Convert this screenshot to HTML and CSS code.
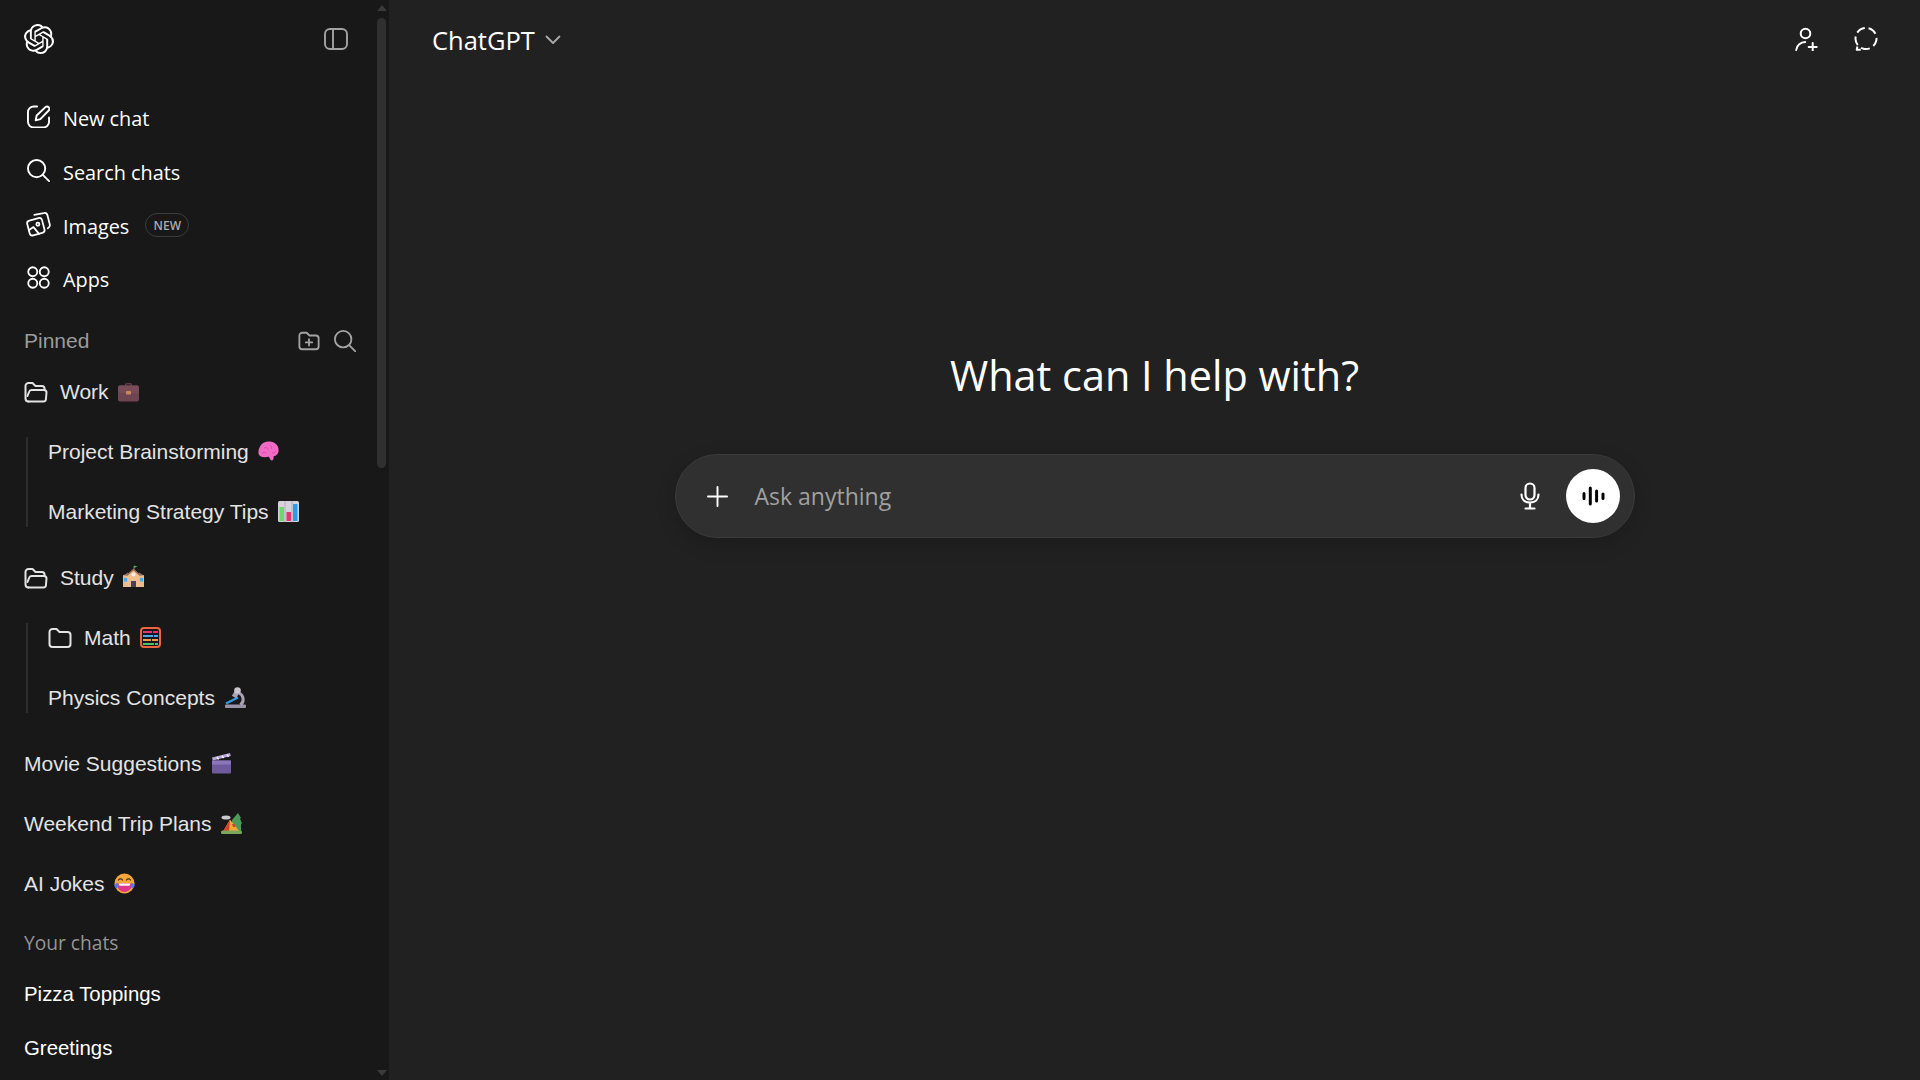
FILE: index.html
```html
<!DOCTYPE html>
<html lang="en">
<head>
<meta charset="utf-8">
<title>ChatGPT</title>
<link rel="stylesheet" href="styles.css">
</head>
<body>
<div class="app">
  <aside class="sidebar">
    <div class="side-content">
      <div class="side-top">
        <svg class="logo" viewBox="0 0 24 24"><path fill="#fff" d="M22.282 9.821a5.985 5.985 0 0 0-.516-4.91 6.046 6.046 0 0 0-6.51-2.9A6.065 6.065 0 0 0 4.981 4.18a5.985 5.985 0 0 0-3.998 2.9 6.046 6.046 0 0 0 .743 7.097 5.98 5.98 0 0 0 .51 4.911 6.051 6.051 0 0 0 6.515 2.9A5.985 5.985 0 0 0 13.26 24a6.056 6.056 0 0 0 5.772-4.206 5.99 5.99 0 0 0 3.997-2.9 6.056 6.056 0 0 0-.747-7.073zM13.26 22.43a4.476 4.476 0 0 1-2.876-1.04l.141-.081 4.779-2.758a.795.795 0 0 0 .392-.681v-6.737l2.02 1.168a.071.071 0 0 1 .038.052v5.583a4.504 4.504 0 0 1-4.494 4.494zM3.6 18.304a4.47 4.47 0 0 1-.535-3.014l.142.085 4.783 2.759a.771.771 0 0 0 .78 0l5.843-3.369v2.332a.08.08 0 0 1-.033.062L9.74 19.95a4.5 4.5 0 0 1-6.14-1.646zM2.34 7.896a4.485 4.485 0 0 1 2.366-1.973V11.6a.766.766 0 0 0 .388.676l5.815 3.355-2.02 1.168a.076.076 0 0 1-.071 0l-4.83-2.786A4.504 4.504 0 0 1 2.34 7.872zm16.597 3.855l-5.833-3.387L15.119 7.2a.076.076 0 0 1 .071 0l4.83 2.791a4.494 4.494 0 0 1-.676 8.105v-5.678a.79.79 0 0 0-.407-.667zm2.01-3.023l-.141-.085-4.774-2.782a.776.776 0 0 0-.785 0L9.409 9.23V6.897a.066.066 0 0 1 .028-.061l4.83-2.787a4.5 4.5 0 0 1 6.68 4.66zm-12.64 4.135l-2.02-1.164a.08.08 0 0 1-.038-.057V6.075a4.5 4.5 0 0 1 7.375-3.453l-.142.08L8.704 5.46a.795.795 0 0 0-.393.681zm1.097-2.365l2.602-1.5 2.607 1.5v2.999l-2.597 1.5-2.607-1.5z"/></svg>
        <svg class="ico-toggle" viewBox="0 0 24 22" fill="none" stroke="#a3a3a3" stroke-width="1.9"><rect x="1" y="1" width="22" height="20" rx="5"/><path d="M9 1.5v19"/></svg>
      </div>

      <nav class="nav">
        <div class="nav-row">
          <svg class="ico" viewBox="0 0 24 24" fill="none" stroke="#fff" stroke-width="2" stroke-linecap="round" stroke-linejoin="round"><path d="M10.5 1.500H7a6 6 0 0 0-6 6v10a6 6 0 0 0 6 6h10a6 6 0 0 0 6-6v-4.500"/><path d="M19.500 2a2.500 2.500 0 0 1 3.400 3.500l-9 9.300-4.900 1.200 1.100-5z"/></svg>
          <span>New chat</span>
        </div>
        <div class="nav-row">
          <svg class="ico" viewBox="0 0 24 24" fill="none" stroke="#fff" stroke-width="2" stroke-linecap="round"><circle cx="10" cy="10" r="9"/><path d="M16.500 16.500l7 7"/></svg>
          <span>Search chats</span>
        </div>
        <div class="nav-row">
          <svg class="ico ico-wide" viewBox="0 0 24 24" fill="none" stroke="#fff" stroke-width="1.700" stroke-linecap="round" stroke-linejoin="round"><path d="M3.200 8.200l8.800-2.400a2.800 2.800 0 0 1 3.400 2l2.300 8.800a2.800 2.800 0 0 1-2 3.400l-8.800 2.400a2.800 2.800 0 0 1-3.400-2L1.200 11.600a2.800 2.800 0 0 1 2-3.400z"/><path d="M8 2.800l9-1.800a3 3 0 0 1 3.600 2.200l2.200 8.600c.4 1.600-.3 3-1.800 3.800"/><path d="M2.600 17.500l4.600-3 5.300 6.500"/><circle cx="11.400" cy="11.800" r="1.500"/></svg>
          <span>Images</span>
          <span class="badge">NEW</span>
        </div>
        <div class="nav-row">
          <svg class="ico" viewBox="0 0 24 24" fill="none" stroke="#fff" stroke-width="1.900"><circle cx="6" cy="6" r="4.700"/><circle cx="18" cy="6" r="4.700"/><circle cx="6" cy="18" r="4.700"/><circle cx="18" cy="18" r="4.700"/></svg>
          <span>Apps</span>
        </div>
      </nav>

      <div class="section-head">
        <span>Pinned</span>
        <div class="section-tools">
          <svg class="ico-sm" viewBox="0 0 24 24" fill="none" stroke="#a3a3a3" stroke-width="2" stroke-linecap="round" stroke-linejoin="round"><path d="M1.500 6a3 3 0 0 1 3-3h5l3 3h7a3 3 0 0 1 3 3v9a3 3 0 0 1-3 3h-15a3 3 0 0 1-3-3z"/><path d="M12 10v7M8.500 13.500h7"/></svg>
          <svg class="ico-sm" viewBox="0 0 24 24" fill="none" stroke="#a3a3a3" stroke-width="2" stroke-linecap="round"><circle cx="10" cy="10" r="9"/><path d="M16.500 16.500l7 7"/></svg>
        </div>
      </div>

      <div class="pinned">
        <div class="p-row">
          <svg class="ico-folder" viewBox="0 0 24 22" fill="none" stroke="#e3e3e3" stroke-width="2" stroke-linecap="round" stroke-linejoin="round"><path d="M4.500 20.500h15a2.500 2.500 0 0 0 2.400-2l.6-7a2.500 2.500 0 0 0-2.500-2.500H7.500a2.500 2.500 0 0 0-2.400 1.800L3.500 15"/><path d="M4.500 20.500A3 3 0 0 1 1.500 17.500V5a3 3 0 0 1 3-3h4l3 3h6.500a2.500 2.500 0 0 1 2.500 2.500V9"/></svg>
          <span>Work</span>
          <svg class="emoji" viewBox="0 0 21 21"><path fill="#5f3a45" d="M7 5V3.500A1.500 1.500 0 0 1 8.500 2h4A1.500 1.500 0 0 1 14 3.500V5h-1.600V3.600H8.600V5z"/><rect y="4.500" width="21" height="16" rx="2" fill="#6f4552"/><rect y="4.500" width="21" height="7.500" rx="2" fill="#7a4c5a"/><rect x="8" y="10" width="5" height="3.500" rx=".8" fill="#c98a5a"/></svg>
        </div>
        <div class="tree">
          <div class="t-row"><span>Project Brainstorming</span>
            <svg class="emoji" viewBox="0 0 21 21"><path fill="#f26ac4" d="M6 1.500c3-1.500 8-1.500 10.500.5 3 1.500 4.500 5 4 8.500-.3 2.500-2.500 4.500-5 5 .5 2.300-.3 4-1.800 4-1.500-.5-2-2-2.700-3.700C6 16.500 2 16.500.600 13 0 9.500 1.500 4 6 1.500z"/><path fill="none" stroke="#c94aa5" stroke-width=".8" d="M6 7c2-1 4 0 4.500 1.500M12 4c1.500 1 2 2.500 1.500 4M4 12c1.500-1 3-.5 4 0M14 12c1.500 0 3-.5 4-2"/></svg>
          </div>
          <div class="t-row"><span>Marketing Strategy Tips</span>
            <svg class="emoji" viewBox="0 0 21 21"><rect width="21" height="21" rx="1.500" fill="#d5d2da"/><path stroke="#a9a6b2" stroke-width=".8" d="M7 0v21M14 0v21"/><rect x="1.500" y="6" width="4.500" height="14" rx=".6" fill="#6ed86e"/><rect x="8.500" y="11" width="4.500" height="9" rx=".6" fill="#e8336e"/><rect x="15" y="3" width="4.500" height="17" rx=".6" fill="#2a9be8"/></svg>
          </div>
        </div>
        <div class="p-row">
          <svg class="ico-folder" viewBox="0 0 24 22" fill="none" stroke="#e3e3e3" stroke-width="2" stroke-linecap="round" stroke-linejoin="round"><path d="M4.500 20.500h15a2.500 2.500 0 0 0 2.400-2l.6-7a2.500 2.500 0 0 0-2.500-2.500H7.500a2.500 2.500 0 0 0-2.400 1.800L3.500 15"/><path d="M4.500 20.500A3 3 0 0 1 1.500 17.500V5a3 3 0 0 1 3-3h4l3 3h6.500a2.500 2.500 0 0 1 2.500 2.500V9"/></svg>
          <span>Study</span>
          <svg class="emoji tall" viewBox="0 0 21 22"><path stroke="#888" stroke-width=".8" d="M11 6V1"/><path fill="#3fb54a" d="M11 .500l3.500 1-3.500 1.500z"/><rect y="10" width="5.500" height="12" fill="#e8bc8f"/><rect x="15.500" y="10" width="5.500" height="12" fill="#e8bc8f"/><path fill="#8a6f66" d="M0 10.500L5 7.500l1 3zM21 10.500L16 7.500l-1 3z"/><path fill="#f0c08e" d="M4.500 22V9.500L10.500 4l6 5.500V22z"/><path fill="#9a6b55" d="M3.500 10L10.500 3.500 17.500 10l-1 .8-6-5.300-6 5.300z"/><circle cx="10.500" cy="9.500" r="2" fill="#eee"/><rect x="8" y="16" width="5" height="6" fill="#4a3f58"/><rect x="1" y="13" width="3" height="3.500" fill="#4aa8e8"/><rect x="17" y="13" width="3" height="3.500" fill="#4aa8e8"/></svg>
        </div>
        <div class="tree">
          <div class="t-row">
            <svg class="ico-folder" viewBox="0 0 24 22" fill="none" stroke="#e3e3e3" stroke-width="2" stroke-linejoin="round"><path d="M1.500 5a3 3 0 0 1 3-3h4l3 3h8a3 3 0 0 1 3 3v9a3 3 0 0 1-3 3h-15a3 3 0 0 1-3-3z"/></svg>
            <span>Math</span>
            <svg class="emoji emoji-close" viewBox="0 0 21 21"><rect x="1" y="1" width="19" height="19" rx="3" fill="#1a1320" stroke="#f0643c" stroke-width="2"/><path stroke="#e8336e" stroke-width="2.200" stroke-dasharray="9 1 6" d="M3 5h15"/><path stroke="#4aa8e8" stroke-width="2.200" stroke-dasharray="10 1 5" d="M3 9h15"/><path stroke="#f0a040" stroke-width="2.200" stroke-dasharray="8 1 7" d="M3 13h15"/><path stroke="#4ac36a" stroke-width="2.200" stroke-dasharray="11 1 4" d="M3 17h15"/></svg>
          </div>
          <div class="t-row"><span>Physics Concepts</span>
            <svg class="emoji" viewBox="0 0 21 21"><rect y="17.500" width="21" height="3.500" rx="1" fill="#9a92a8"/><path fill="none" stroke="#a9a2b4" stroke-width="3" d="M14 6c5 2.500 5.500 8.500 1.500 12"/><path stroke="#2f9ae0" stroke-width="2.200" d="M1 16.500l12-6"/><path stroke="#a9a2b4" stroke-width="5" d="M13 3.500L9 10"/><circle cx="12.500" cy="3.500" r="3.300" fill="#c9c4d0"/></svg>
          </div>
        </div>
        <div class="p-row p-plain"><span>Movie Suggestions</span>
          <svg class="emoji narrow" viewBox="0 0 19 21"><rect x="0" y="7.500" width="19" height="13" rx="1.200" fill="#6f5a9e"/><rect x="0" y="7.500" width="19" height="4" fill="#8a76b8"/><path fill="#b9a6dc" d="M0 4.500L18 0l.8 3L.800 7.500z"/><path stroke="#fff" stroke-width="1.400" d="M5 4l1.500 2.500M10 2.800l1.500 2.400M15 1.500l1.500 2.400"/></svg>
        </div>
        <div class="p-row p-plain"><span>Weekend Trip Plans</span>
          <svg class="emoji" viewBox="0 0 21 21"><path fill="#4c9a5a" d="M17 0l3 5-1 .5 2 5-1 .5v9h-9V7z"/><ellipse cx="5" cy="4.500" rx="4.500" ry="2" fill="#c9c9d0"/><path fill="#f5a936" d="M9 6.500L18.500 18.500H2z"/><path fill="#d9402c" d="M9 6.500L2 18.500h6z"/><path fill="#d9402c" d="M11 11h2.500l1 3h-2.500z"/><rect y="17.500" width="21" height="3.500" rx="1.500" fill="#7aa85a"/></svg>
        </div>
        <div class="p-row p-plain"><span>AI Jokes</span>
          <svg class="emoji" viewBox="0 0 21 21"><circle cx="10.500" cy="10.500" r="10" fill="#f5a63a"/><path fill="#e0358c" d="M3 10.500h15c.5 4-3 8.500-7.500 8.500S2.500 14.500 3 10.500z"/><path fill="#fff" d="M4.500 10.500h12l-1 2.300h-10z"/><path fill="none" stroke="#4a2f20" stroke-width="1.300" stroke-linecap="round" d="M4.500 7c1-1.500 3-1.500 4 0M12.500 7c1-1.500 3-1.500 4 0"/><path fill="#4f7de8" d="M0 12l3.500-2.500L4.500 14 2 15.500zM21 12l-3.500-2.500-1 4.500 2.500 1.500z"/></svg>
        </div>
      </div>

      <div class="section-label">Your chats</div>
      <div class="chat-row">Pizza Toppings</div>
      <div class="chat-row">Greetings</div>
    </div>
    <div class="scrollbar">
      <span class="arrow-up"></span>
      <span class="thumb"></span>
      <span class="track-fill"></span>
      <span class="arrow-down"></span>
    </div>
  </aside>

  <main class="main">
    <header class="topbar">
      <div class="model">
        <span>ChatGPT</span>
        <svg class="chev" viewBox="0 0 16 10" fill="none" stroke="#aaa" stroke-width="1.800" stroke-linecap="round" stroke-linejoin="round"><path d="M1.500 1.500L8 8l6.500-6.500"/></svg>
      </div>
      <div class="top-actions">
        <svg class="ico-top" viewBox="0 0 24 24" fill="none" stroke="#fff" stroke-width="2" stroke-linecap="round"><circle cx="10.500" cy="6.500" r="4.800"/><path d="M1.200 23c.5-4.500 4.500-8 9-8M17.700 16v8M13.700 20h8"/></svg>
        <svg class="ico-top" viewBox="0 0 24 24" fill="none" stroke="#fff" stroke-width="2" stroke-linejoin="round"><circle class="dash-ring" cx="12" cy="11.500" r="10.500"/><path d="M3.400 19.500l-.7 3.200h4"/></svg>
      </div>
    </header>
    <section class="hero">
      <h1 class="title">What can I help with?</h1>
      <div class="composer">
        <svg class="plus" viewBox="0 0 22 22" fill="none" stroke="#fff" stroke-width="2" stroke-linecap="round"><path d="M11 1v20M1 11h20"/></svg>
        <span class="placeholder">Ask anything</span>
        <svg class="mic" viewBox="0 0 20 28" fill="none" stroke="#fff" stroke-width="2.200" stroke-linecap="round"><rect x="5.500" y="1.500" width="9" height="16" rx="4.500"/><path d="M1.500 12.500c0 5 3.500 8 8.500 8s8.500-3 8.500-8M10 20.500v5.500M5.500 26.500h9"/></svg>
        <button class="voice" type="button">
          <svg viewBox="0 0 24 20" fill="none" stroke="#000" stroke-width="3" stroke-linecap="round"><path d="M3 7.500v5M9.300 2v16M15.600 5v10M22 8v4.500"/></svg>
        </button>
      </div>
    </section>
  </main>
</div>
</body>
</html>
```
FILE: styles.css
```css
* { box-sizing: border-box; }
html, body { margin: 0; height: 100%; }
body {
  background: #212121;
  color: #fff;
  font-family: "Open Sans", "Liberation Sans", sans-serif;
  overflow: hidden;
}
.app { display: flex; height: 1080px; }

/* sidebar */
.sidebar { width: 389px; flex: none; display: flex; background: #181818; overflow: hidden; }
.side-content { flex: 1; min-width: 0; padding: 0 0 0 24px; }
.side-top { height: 92px; display: flex; justify-content: space-between; align-items: flex-start; padding: 24px 29px 0 0; }
.logo { width: 30px; height: 30px; }
.ico-toggle { width: 24px; height: 22px; margin-top: 4px; }

.nav-row { height: 53.700px; display: flex; align-items: center; font-size: 19.850px; padding-left: 3px; }
.nav-row > span:first-of-type { margin-left: 13px; }
.ico { width: 23px; height: 23px; flex: none; margin-bottom: 4px; }
.ico-wide { width: 25px; height: 25px; margin-left: -1px; margin-right: -1px; }
.badge {
  margin-left: 16px; height: 24px; width: 44px; border: 1px solid #3d3d3d; border-radius: 12px; margin-bottom: 2px;
  color: #ababab; font-size: 12px; font-weight: 600; display: flex; align-items: center; justify-content: center;
}

.section-head {
  height: 30px; margin-top: 18.800px; display: flex; align-items: center; justify-content: space-between;
  font-family: "Liberation Sans", sans-serif; font-size: 21px; color: #9b9b9b; padding-right: 21px;
}
.section-tools { display: flex; gap: 14px; }
.ico-sm { width: 22px; height: 22px; }

.pinned { margin-top: 21px; display: flex; flex-direction: column; font-family: "Liberation Sans", sans-serif; font-size: 21px; color: #e3e3e3; }
.p-row, .t-row { height: 30px; display: flex; align-items: center; }
.p-row { margin-bottom: 30px; }
.ico-folder { width: 24px; height: 22px; flex: none; margin-right: 12px; }
.emoji { width: 21px; height: 21px; flex: none; margin-left: 9.700px; }
.emoji.narrow { width: 19px; margin-left: 10.700px; }
.emoji.tall { height: 22px; margin-bottom: 3px; }
.emoji.emoji-close { margin-left: 9.500px; }
.tree { margin-left: 2px; border-left: 2px solid #2d2d2d; padding-left: 20px; display: flex; flex-direction: column; gap: 30px; margin-bottom: 36px; }
.p-plain:last-child { margin-bottom: 0; }

.section-label { margin-top: 32px; height: 24px; line-height: 24px; font-size: 19.200px; color: #959595; }
.chat-row { height: 54px; display: flex; align-items: center; font-family: "Liberation Sans", sans-serif; font-size: 20.400px; color: #fff; }
.section-label + .chat-row { margin-top: 13px; }

/* scrollbar */
.scrollbar { width: 12px; flex: none; display: flex; flex-direction: column; align-items: flex-start; padding-top: 5px; }
.arrow-up, .arrow-down { width: 0; height: 0; border-left: 5px solid transparent; border-right: 5px solid transparent; }
.arrow-up { border-bottom: 6px solid #3a3a3a; }
.arrow-down { border-top: 6px solid #3a3a3a; margin-bottom: 4px; }
.thumb { width: 9px; height: 450px; margin-top: 7px; background: #303030; border-radius: 5px; }
.track-fill { flex: 1; }

/* main */
.main { flex: 1; min-width: 0; display: flex; flex-direction: column; }
.topbar { height: 80px; display: flex; justify-content: space-between; align-items: center; padding: 0 42px 0 43px; }
.model { display: flex; align-items: center; gap: 10px; font-size: 25.500px; }
.chev { width: 16px; height: 10px; }
.top-actions { display: flex; gap: 35px; margin-bottom: 2px; }
.ico-top { width: 24px; height: 24px; }
.dash-ring { stroke-dasharray: 9 4.200; transform: rotate(-76deg); transform-origin: 12px 11.500px; }

.hero { display: flex; flex-direction: column; align-items: center; padding-top: 269px; }
.title { margin: 0; height: 52px; line-height: 52px; font-size: 41.400px; font-weight: 400; }
.composer {
  margin-top: 53px; width: 960px; height: 84px; border-radius: 42px; background: #303030; border: 1px solid #3a3a3a;
  box-shadow: 0 6px 20px rgba(0,0,0,.18); display: flex; align-items: center; padding: 0 14px 0 31px;
}
.plus { width: 21px; height: 21px; flex: none; }
.placeholder { flex: 1; margin-left: 27px; font-size: 23px; color: #a0a0a0; }
.mic { width: 20px; height: 28px; flex: none; margin-right: 26px; }
.voice { width: 54px; height: 54px; flex: none; border: 0; border-radius: 50%; background: #fff; padding: 0; display: flex; align-items: center; justify-content: center; }
.voice svg { width: 24px; height: 20px; }
```
